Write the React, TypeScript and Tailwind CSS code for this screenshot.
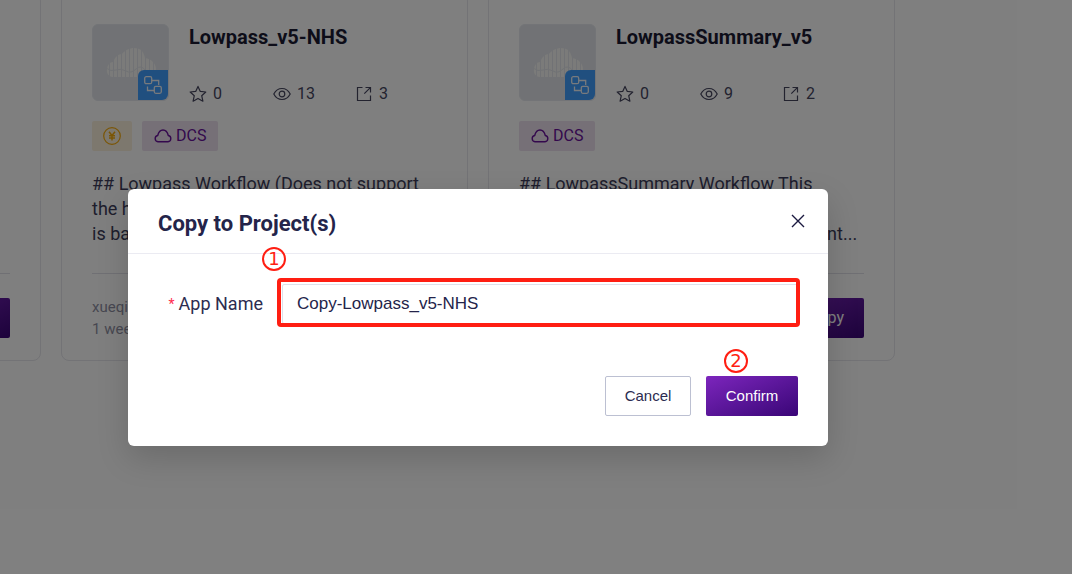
import React from 'react';

interface App {
  name: string;
  stars: number;
  views: number;
  copies: number;
  paid: boolean;
  description: string[];
  owner: string;
  updated: string;
}

const APPS: App[] = [
  {
    name: 'Lowpass_v5',
    stars: 0,
    views: 12,
    copies: 2,
    paid: false,
    description: ['## Lowpass Workflow', 'for low depth', 'sequencing'],
    owner: 'xueqi',
    updated: '1 week ago',
  },
  {
    name: 'Lowpass_v5-NHS',
    stars: 0,
    views: 13,
    copies: 3,
    paid: true,
    description: ['## Lowpass Workflow (Does not support', 'the human sample) This workflow', 'is based on low depth data'],
    owner: 'xueqi',
    updated: '1 week ago',
  },
  {
    name: 'LowpassSummary_v5',
    stars: 0,
    views: 9,
    copies: 2,
    paid: false,
    description: ['## LowpassSummary Workflow This', 'workflow summarizes the results', 'of the Lowpass samples, merged into int...'],
    owner: 'xueqi',
    updated: '1 week ago',
  },
];

const StarIcon = () => (
  <svg viewBox="0 0 18 18" className="size-[18px]" fill="none" stroke="currentColor" strokeWidth="1.2" strokeLinejoin="round">
    <path d="M9 1.400l2.300 5 5.500.6-4.100 3.700 1.200 5.500L9 13.400l-4.900 2.800 1.200-5.500L1.200 7l5.500-.6z" />
  </svg>
);

const EyeIcon = () => (
  <svg viewBox="0 0 18 18" className="size-[18px]" fill="none" stroke="currentColor" strokeWidth="1.2">
    <path d="M.8 9C2.600 5.500 5.500 3.500 9 3.500s6.400 2 8.200 5.500c-1.800 3.500-4.700 5.500-8.200 5.500S2.600 12.500.8 9z" />
    <circle cx="9" cy="9" r="2.800" />
  </svg>
);

const ShareIcon = () => (
  <svg viewBox="0 0 18 18" className="size-[18px]" fill="none" stroke="currentColor" strokeWidth="1.2">
    <path d="M7.500 2.500H2.500v13h13v-5M10.500 2.500h5v5M15.300 2.700L9.300 8.700" />
  </svg>
);

const CloudIcon = () => (
  <svg viewBox="0 0 18 14" className="h-3.5 w-[18px]" fill="none" stroke="currentColor" strokeWidth="1.4" strokeLinejoin="round">
    <path d="M4 12.800a3.200 3.200 0 0 1-.3-6.300C4.500 3.200 6.400 1 9 1s4.500 2.200 5.300 5.500a3.200 3.200 0 0 1-.3 6.300z" />
  </svg>
);

const YenIcon = () => (
  <svg viewBox="0 0 18 18" className="size-[18px]" fill="none" stroke="currentColor" strokeWidth="1.2">
    <circle cx="9" cy="9" r="8.300" />
    <path d="M6 4.800l3 3.700 3-3.700M9 8.500v5M6 8.700h6M6 11h6" strokeWidth="1.500" />
  </svg>
);

const WorkflowIcon = () => (
  <svg viewBox="0 0 18 18" className="size-[18px]" fill="none" stroke="currentColor" strokeWidth="1.3">
    <rect x=".7" y=".7" width="7" height="7" rx="1.500" />
    <rect x="10.300" y="10.300" width="7" height="7" rx="1.500" />
    <path d="M7.700 4.500h7v4.500M3.500 10.500v4h6.800" />
  </svg>
);

const CloudLogo = () => (
  <svg viewBox="0 0 50 30" className="h-[30px] w-[50px]" fill="none">
    <defs>
      <clipPath id="cloud">
        <path d="M6 29a6 6 0 0 1-5-7c0-5 3-8 6-8 2-5 5-8 9-8 C19 2 24 0 28 0c7 0 10 4 11 10 6 1 11 5 11 11 0 5-3 8-8 8z" />
      </clipPath>
    </defs>
    <g clipPath="url(#cloud)">
      {[...Array(13)].map((_, i) => (
        <rect key={i} x={i * 4} y="0" width="3" height="30" fill="#f6f6f4" />
      ))}
      <path d="M0 20q5 4 10 2t10 1 10-2 10 2 10-1" stroke="#e2e5ea" strokeWidth="1" />
    </g>
  </svg>
);

const Step: React.FC<{ children: number }> = ({ children }) => (
  <span className="flex size-6 items-center justify-center rounded-full border-2 border-[#ff1e12] font-['DejaVu_Sans',sans-serif] text-lg leading-5 text-[#ff1e12]">
    {children}
  </span>
);

const AppCard: React.FC<{ app: App }> = ({ app }) => (
  <article className="rounded-lg border border-[#e6e6ec] px-[30px] pt-[30px] pb-5">
    <div className="flex gap-5">
      <div className="relative flex size-[77px] shrink-0 items-center justify-center rounded-md border border-[#e6e9ee] bg-[#e2e5ea]">
        <CloudLogo />
        <span className="absolute right-0 bottom-0 flex size-[30px] items-center justify-center rounded-tl-md rounded-br-md bg-[#409eff] text-[#eef4fa]">
          <WorkflowIcon />
        </span>
      </div>
      <div className="flex flex-col justify-between">
        <h2 className="text-xl leading-[26px] font-bold text-[#1b1a33]">{app.name}</h2>
        <div className="flex h-[15px] items-center text-base text-[#46465f]">
          <span className="flex w-[84px] items-center gap-1.5"><StarIcon />{app.stars}</span>
          <span className="flex w-[82px] items-center gap-1.5"><EyeIcon />{app.views}</span>
          <span className="flex items-center gap-1.5"><ShareIcon />{app.copies}</span>
        </div>
      </div>
    </div>

    <div className="mt-5 flex h-[30px] gap-2.5">
      {app.paid && (
        <span className="flex w-10 items-center justify-center rounded-xs bg-[#fbf1dd] text-[#f5ab0c]"><YenIcon /></span>
      )}
      <span className="flex items-center gap-1 rounded-xs bg-[#ece0ee] px-3 text-base text-[#68109b]"><CloudIcon />DCS</span>
    </div>

    <p className="mt-5 text-lg leading-[25px] whitespace-nowrap text-[#3c3c5a]">
      {app.description.map(line => (
        <span key={line} className="block">{line}</span>
      ))}
    </p>

    <div className="mt-[27px] flex items-start justify-between border-t border-[#e0e0e8] pt-[22px]">
      <div className="text-[15px] leading-[22px] text-[#8f8fa3]">
        <p>{app.owner}</p>
        <p>{app.updated}</p>
      </div>
      <button className="mt-0.5 h-10 rounded-xs bg-linear-to-br from-[#7d25bd] to-[#3a0577] px-5 text-base text-white">Copy</button>
    </div>
  </article>
);

const CopyDialog = () => (
  <div className="absolute inset-0 bg-black/50 pt-[189px] pr-[244px] pl-32">
    <div
      role="dialog"
      aria-labelledby="dialog-title"
      className="rounded-md bg-white shadow-[0_12px_32px_rgba(0,0,0,0.16)]"
    >
      <header className="flex h-[65px] items-center justify-between border-b border-[#ebebf2] px-[30px]">
        <h1 id="dialog-title" className="pt-1 text-[22px] font-bold text-[#24244a]">Copy to Project(s)</h1>
        <button aria-label="Close" className="-mr-2.5 flex size-5 items-center justify-center text-[#1b1a40]">
          <svg viewBox="0 0 14 14" className="size-3.5" fill="none" stroke="currentColor" strokeWidth="1.400">
            <path d="M1 1l12 12M13 1L1 13" />
          </svg>
        </button>
      </header>

      <form className="px-[30px] pt-[30px] pb-[30px]" onSubmit={e => e.preventDefault()}>
        <div className="flex items-center">
          <label htmlFor="app-name" className="flex w-[124px] shrink-0 items-center justify-end gap-1 pr-[19px] text-lg text-[#2c2c50]">
            <span className="text-sm text-[#ff2b4e]">*</span>
            App Name
          </label>
          <div className="relative flex-1">
            <input
              id="app-name"
              defaultValue="Copy-Lowpass_v5-NHS"
              className="h-10 w-full rounded-xs border border-[#dfe0ea] px-3.5 font-['Liberation_Sans',sans-serif] text-[17px] text-[#24244a] outline-none"
            />
            <div className="pointer-events-none absolute -top-1.5 -right-0.5 -bottom-[3px] -left-[5px] rounded-sm border-4 border-[#ff1e12]" />
            <div className="absolute -top-[37px] -left-5"><Step>{1}</Step></div>
          </div>
        </div>

        <div className="mt-[52px] flex justify-end gap-[15px] font-['Liberation_Sans',sans-serif] text-[15px]">
          <button type="button" className="h-10 w-[86px] rounded-xs border border-[#bcc0d2] text-[#2c2c50]">Cancel</button>
          <div className="relative">
            <button type="submit" className="h-10 w-[92px] rounded-xs bg-linear-to-br from-[#7d25bd] to-[#3a0577] text-white">Confirm</button>
            <div className="absolute -top-[27px] left-[18px]"><Step>{2}</Step></div>
          </div>
        </div>
      </form>
    </div>
  </div>
);

export default function App() {
  return (
    <div className="relative min-h-screen overflow-hidden bg-white font-[Roboto,sans-serif]">
      <main className="-mt-[7px] -ml-[366px] grid grid-cols-3 gap-5 pr-[177px]">
        {APPS.map(app => (
          <AppCard key={app.name} app={app} />
        ))}
      </main>
      <CopyDialog />
    </div>
  );
}
